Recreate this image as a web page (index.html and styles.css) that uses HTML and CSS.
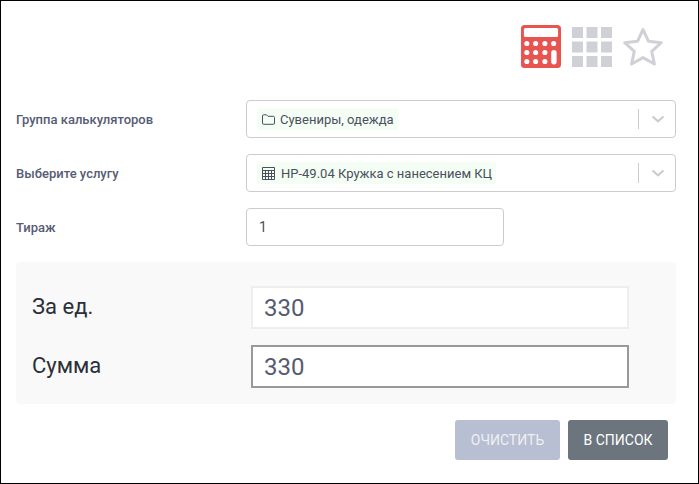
FILE: index.html
```html
<!DOCTYPE html>
<html lang="ru">
<head>
<meta charset="utf-8">
<title>Калькулятор</title>
<link rel="stylesheet" href="styles.css">
</head>
<body>
<div class="frame">
  <div class="tabs">
    <svg class="tab-icon calc" width="40" height="43" viewBox="0 0 41 43" preserveAspectRatio="none">
      <rect x="0" y="0" width="41" height="43" rx="3.5" fill="#e8544f"/>
      <rect x="3" y="3" width="35" height="9" rx="1.5" fill="#fff"/>
      <g fill="#fff">
        <circle cx="6" cy="18.500" r="2.600"/><circle cx="15" cy="18.500" r="2.600"/><circle cx="24.500" cy="18.500" r="2.600"/><circle cx="33.500" cy="18.500" r="2.600"/>
        <circle cx="6" cy="27.500" r="2.600"/><circle cx="15" cy="27.500" r="2.600"/><circle cx="24.500" cy="27.500" r="2.600"/>
        <circle cx="6" cy="36.500" r="2.600"/><circle cx="15" cy="36.500" r="2.600"/><circle cx="24.500" cy="36.500" r="2.600"/>
        <rect x="31" y="25" width="5.500" height="14.500" rx="2.700"/>
      </g>
    </svg>
    <svg class="tab-icon" width="40" height="40" viewBox="0 0 40 40" fill="#d0d1d7">
      <rect x="0" y="0" width="11" height="11"/><rect x="14.500" y="0" width="11" height="11"/><rect x="29" y="0" width="11" height="11"/>
      <rect x="0" y="14.500" width="11" height="11"/><rect x="14.500" y="14.500" width="11" height="11"/><rect x="29" y="14.500" width="11" height="11"/>
      <rect x="0" y="29" width="11" height="11"/><rect x="14.500" y="29" width="11" height="11"/><rect x="29" y="29" width="11" height="11"/>
    </svg>
    <svg class="tab-icon" width="40" height="40" viewBox="0 0 40 40">
      <path d="M20 2.500 L25.500 14.300 L38.300 15.700 L28.700 24.300 L31.400 37 L20 30.600 L8.600 37 L11.300 24.300 L1.700 15.700 L14.500 14.300 Z" fill="none" stroke="#d0d1d7" stroke-width="3" stroke-linejoin="round"/>
    </svg>
  </div>

  <div class="form-row">
    <div class="label">Группа калькуляторов</div>
    <div class="select">
      <span class="chip">
        <svg class="chip-icon" width="13" height="11" viewBox="0 0 13 11"><path d="M.5 2 Q.5 .8 1.700 .8 H4.500 L6 2.300 H11.300 Q12.500 2.300 12.500 3.500 V9 Q12.500 10.300 11.300 10.300 H1.700 Q.5 10.300 .5 9 Z" fill="none" stroke="#4a4f5e" stroke-width="1"/></svg>
        Сувениры, одежда
      </span>
      <span class="sep"></span>
      <svg class="chev" width="14" height="8" viewBox="0 0 14 8"><path d="M1.500 1.500 L7 6.300 L12.500 1.500" fill="none" stroke="#cccccc" stroke-width="2.200"/></svg>
    </div>
  </div>

  <div class="form-row">
    <div class="label">Выберите услугу</div>
    <div class="select">
      <span class="chip chip-wide">
        <svg class="chip-icon" width="13" height="13" viewBox="0 0 13 13"><path d="M.5 .5 H12.500 V12.500 H.5 Z M.5 3.500 H12.500 M.5 6.500 H12.500 M.5 9.500 H12.500 M3.500 3.500 V12.500 M6.500 3.500 V12.500 M9.500 3.500 V12.500" fill="none" stroke="#4a4f5e" stroke-width="1"/></svg>
        НР-49.04 Кружка с нанесением КЦ
      </span>
      <span class="sep"></span>
      <svg class="chev" width="14" height="8" viewBox="0 0 14 8"><path d="M1.500 1.500 L7 6.300 L12.500 1.500" fill="none" stroke="#cccccc" stroke-width="2.200"/></svg>
    </div>
  </div>

  <div class="form-row">
    <div class="label">Тираж</div>
    <div class="text-input">1</div>
  </div>

  <div class="panel">
    <div class="panel-row">
      <div class="panel-label">За ед.</div>
      <div class="panel-value">330</div>
    </div>
    <div class="panel-row">
      <div class="panel-label">Сумма</div>
      <div class="panel-value strong">330</div>
    </div>
  </div>

  <div class="actions">
    <div class="btn btn-light">ОЧИСТИТЬ</div>
    <div class="btn btn-dark">В СПИСОК</div>
  </div>
</div>
</body>
</html>
```
FILE: styles.css
```css
* { box-sizing: border-box; }
html, body { margin: 0; padding: 0; background: #fff; }
body { font-family: Roboto, "Noto Sans", sans-serif; color: #4a4f5e; }
.frame {
  width: 699px;
  height: 484px;
  border: 1px solid #000;
  padding: 24px 22px 0 15px;
  overflow: hidden;
}
.tabs {
  display: flex;
  justify-content: flex-end;
  align-items: center;
  gap: 11px;
  height: 43px;
  margin-right: 13px;
  margin-bottom: 32px;
}
.tab-icon { display: block; }
.form-row {
  display: flex;
  align-items: center;
  height: 38px;
  margin-bottom: 16px;
}
.label {
  width: 230px;
  font-size: 13px;
  font-weight: 500;
  color: #565c74;
}
.select {
  width: 430px;
  height: 38px;
  border: 1px solid #ccc;
  border-radius: 4px;
  display: flex;
  align-items: center;
  padding-left: 10px;
}
.chip {
  display: inline-flex;
  align-items: center;
  gap: 5px;
  height: 22px;
  padding: 0 5px;
  background: #f5fef4;
  border-radius: 3px;
  font-size: 13px;
  color: #4a4f5e;
}
.chip-wide { gap: 6px; padding-right: 4px; }
.chip-icon { flex: none; }
.sep {
  width: 1px;
  height: 20px;
  background: #ccc;
  margin-left: auto;
}
.chev { margin: 0 10px 0 12px; }
.text-input {
  width: 258px;
  height: 38px;
  border: 1px solid #ccc;
  border-radius: 4px;
  display: flex;
  align-items: center;
  padding-left: 12px;
  font-size: 14px;
  color: #4a4f5e;
}
.panel {
  width: 660px;
  height: 142px;
  background: #f9f9f9;
  border-radius: 4px;
  padding: 24px 47px 0 16px;
  display: flex;
  flex-direction: column;
  gap: 16px;
}
.panel-row { display: flex; align-items: center; height: 43px; }
.panel-label {
  width: 219px;
  font-size: 22px;
  line-height: 42px;
  color: #2b2f38;
  align-self: flex-start;
}
.panel-value {
  width: 378px;
  height: 43px;
  background: #fff;
  border: 2px solid #eeeeee;
  display: flex;
  align-items: center;
  padding-left: 11px;
  font-size: 24px;
  color: #555b70;
}
.panel-value.strong { border-color: #999; }
.actions {
  display: flex;
  justify-content: flex-end;
  gap: 8px;
  width: 652px;
  margin-top: 16px;
}
.btn {
  height: 40px;
  border-radius: 3px;
  display: flex;
  align-items: center;
  justify-content: center;
  font-size: 14px;
  color: #fff;
}
.btn-light { width: 105px; background: #b8bfd2; color: #eef0f5; }
.btn-dark { width: 100px; background: #6c757d; }
```
